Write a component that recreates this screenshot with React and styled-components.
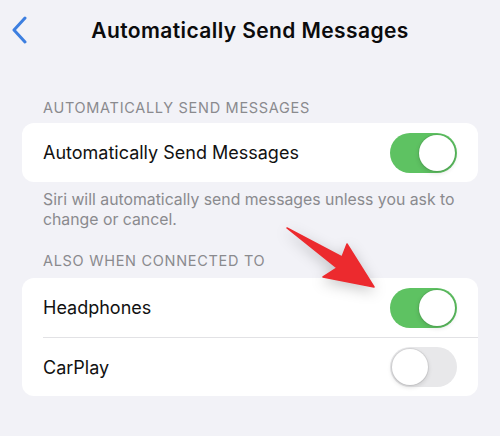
import React from 'react';
import styled, { createGlobalStyle } from 'styled-components';

const GlobalStyle = createGlobalStyle`
  html, body {
    margin: 0;
    padding: 0;
    background: #f2f2f7;
  }
  body {
    font-family: Inter, "Liberation Sans", sans-serif;
    -webkit-font-smoothing: antialiased;
  }
`;

const Screen = styled.div`
  position: relative;
  width: 500px;
  height: 436px;
  overflow: hidden;
  background: #f2f2f7;
`;

const NavBar = styled.div`
  display: grid;
  grid-template-columns: 1fr auto 1fr;
  align-items: center;
  height: 60px;
`;

const BackButton = styled.button`
  display: flex;
  align-items: center;
  justify-self: start;
  margin-left: 11px;
  padding: 0;
  border: 0;
  background: transparent;
  color: #3d7fe0;
  cursor: pointer;
`;

const Title = styled.h1`
  margin: 0;
  font-size: 21px;
  font-weight: 600;
  letter-spacing: 0.4px;
  color: #0b0b0c;
`;

const Content = styled.div`
  display: flex;
  flex-direction: column;
  padding: 0 22px;
`;

const SectionHeader = styled.div`
  margin: ${props => props.$top}px 0 ${props => props.$bottom}px;
  padding: 0 21px;
  font-size: 14.5px;
  line-height: 18px;
  letter-spacing: 0.7px;
  text-transform: uppercase;
  color: #8a8a8e;
`;

const SectionFooter = styled.div`
  margin-top: 8px;
  padding: 0 0 0 21px;
  font-size: 15.8px;
  line-height: 20px;
  color: #8a8a8e;
`;

const Card = styled.div`
  display: flex;
  flex-direction: column;
  background: #fff;
  border-radius: 12px;
  overflow: hidden;
`;

const Row = styled.div`
  display: flex;
  align-items: center;
  justify-content: space-between;
  height: 59px;
  margin-left: 21px;
  padding-right: 21px;
  box-sizing: border-box;
  border-top: ${props => (props.$divider ? '1px solid #e2e2e5' : '0')};
`;

const Label = styled.span`
  font-size: 18px;
  color: #111;
`;

const Track = styled.div`
  position: relative;
  width: 67px;
  height: 40px;
  border-radius: 20px;
  background: ${props => (props.$on ? '#5ec262' : '#e8e8ea')};
  transition: background 0.2s;
`;

const Knob = styled.div`
  position: absolute;
  top: 2px;
  left: ${props => (props.$on ? '29px' : '2px')};
  width: 36px;
  height: 36px;
  border-radius: 50%;
  background: #fff;
  box-shadow: 0 0 0 1px rgba(0, 0, 0, 0.07), 0 2px 5px rgba(0, 0, 0, 0.14);
`;

const Pointer = styled.svg`
  position: absolute;
  left: 0;
  top: 0;
  pointer-events: none;
  filter: drop-shadow(0 4px 7px rgba(0, 0, 0, 0.22));
`;

const Toggle = ({ on }) => (
  <Track $on={on}>
    <Knob $on={on} />
  </Track>
);

const ChevronLeft = () => (
  <svg width="16" height="30" viewBox="0 0 16 30">
    <path
      d="M14 3 L3 15 L14 27"
      fill="none"
      stroke="currentColor"
      strokeWidth="3"
      strokeLinecap="round"
      strokeLinejoin="round"
    />
  </svg>
);

export default function App() {
  return (
    <Screen>
      <GlobalStyle />
      <NavBar>
        <BackButton aria-label="Back">
          <ChevronLeft />
        </BackButton>
        <Title>Automatically Send Messages</Title>
        <span />
      </NavBar>

      <Content>
        <SectionHeader $top={39} $bottom={6}>Automatically Send Messages</SectionHeader>
        <Card>
          <Row>
            <Label>Automatically Send Messages</Label>
            <Toggle on />
          </Row>
        </Card>
        <SectionFooter>
          Siri will automatically send messages unless you ask to change or cancel.
        </SectionFooter>

        <SectionHeader $top={22} $bottom={8}>Also when connected to</SectionHeader>
        <Card>
          <Row>
            <Label>Headphones</Label>
            <Toggle on />
          </Row>
          <Row $divider>
            <Label>CarPlay</Label>
            <Toggle on={false} />
          </Row>
        </Card>
      </Content>

      <Pointer width="500" height="436" viewBox="0 0 500 436">
        <polygon
          points="287,228 342,257 347,244 374,287 323,277 337,268"
          fill="#ec2a2e"
          stroke="#ec2a2e"
          strokeWidth="1.5"
          strokeLinejoin="round"
        />
      </Pointer>
    </Screen>
  );
}
